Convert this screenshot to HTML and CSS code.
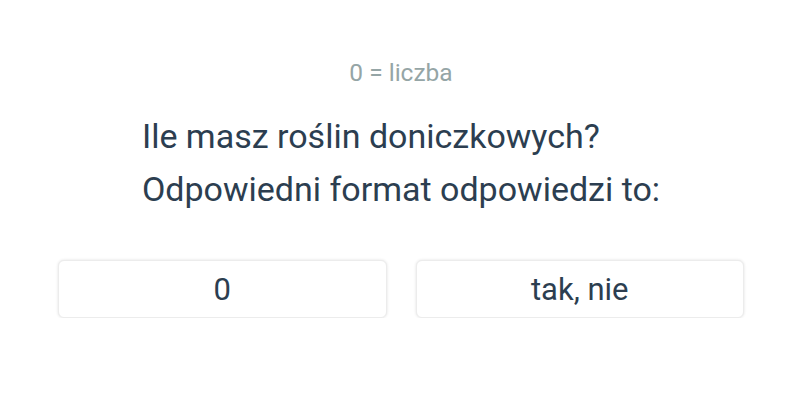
FILE: index.html
```
<!DOCTYPE html>
<html>
<head>
  <meta charset="utf-8">
  <title>Pytanie</title>
  <link rel="stylesheet" href="styles.css">
</head>
<body>
  <div class="container">
    <div class="hint">0 = liczba</div>
    <div class="question">
      <p>Ile masz roślin doniczkowych?</p>
      <p>Odpowiedni format odpowiedzi to:</p>
    </div>
    <div class="answers">
      <button class="answer">0</button>
      <button class="answer">tak, nie</button>
    </div>
  </div>
</body>
</html>
```

FILE: styles.css
```
body {
  font-family: Roboto, "Liberation Sans", sans-serif;
  background-color: #fff;
  color: #2c3e50;
  margin: 0;
  padding: 0;
}

.container {
  padding: 57px 56px 0 58px;
}

.hint {
  text-align: center;
  font-size: 24.5px;
  line-height: 32px;
  color: #95a5a6;
}

.question {
  width: max-content;
  margin: 21px auto 0;
  font-size: 34px;
  line-height: 53px;
}

.question p {
  margin: 0;
}

.answers {
  display: flex;
  gap: 29px;
  margin-top: 44px;
}

.answer {
  flex: 1;
  height: 58px;
  padding: 0;
  background-color: #fff;
  border: 1px solid #ececec;
  border-radius: 6px;
  box-shadow: 0 0 3px rgba(0, 0, 0, 0.12);
  font-family: inherit;
  font-size: 31px;
  color: #2c3e50;
  cursor: pointer;
}
```
